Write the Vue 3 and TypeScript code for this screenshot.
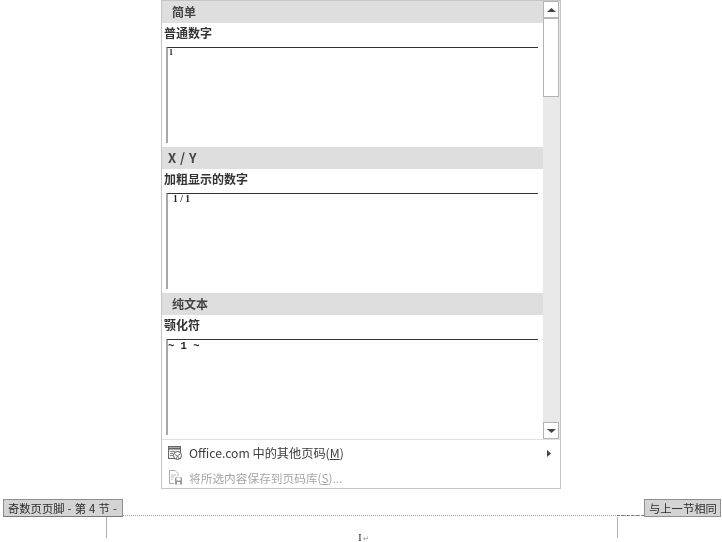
<script setup lang="ts">
interface Section {
  title: string
  label: string
  sample: string
  kind: string
}
const sections: Section[] = [
  { title: '简单', label: '普通数字', sample: '1', kind: 'plain' },
  { title: 'X / Y', label: '加粗显示的数字', sample: '1 / 1', kind: 'bold' },
  { title: '纯文本', label: '颚化符', sample: '~ 1 ~', kind: 'tilde' },
]
</script>

<template>
  <div class="page">
    <div class="panel">
      <div class="gallery">
        <div class="list">
          <section v-for="s in sections" :key="s.title" class="section">
            <h3 :class="['head', s.kind]">{{ s.title }}</h3>
            <div class="label">{{ s.label }}</div>
            <div class="preview"><span :class="['sample', s.kind]">{{ s.sample }}</span></div>
          </section>
        </div>
        <div class="scrollbar">
          <div class="arrow">
            <svg width="11" height="6" viewBox="0 0 11 6"><path d="M5.5 1 10 5H1Z" fill="#444" /></svg>
          </div>
          <div class="thumb"></div>
          <div class="track"></div>
          <div class="arrow">
            <svg width="11" height="6" viewBox="0 0 11 6"><path d="M1 1H10L5.5 5Z" fill="#444" /></svg>
          </div>
        </div>
      </div>
      <div class="menu">
        <div class="item">
          <svg class="icon" width="16" height="16" viewBox="0 0 16 16">
            <rect x="1.5" y="1.5" width="12" height="12" fill="#eee" stroke="#666" />
            <path d="M2 3.5H13" stroke="#666" stroke-width="2" />
            <path d="M3 6.5H8M3 8.5H6M3 10.5H6" stroke="#888" />
            <circle cx="10.5" cy="10.5" r="4" fill="#fff" stroke="#555" />
            <path d="M8 9.5 10.5 11l2.5-2M9 14l1.5-3 1.5 3" stroke="#666" fill="none" stroke-width="0.9" />
          </svg>
          <span class="name">Office.com 中的其他页码(<u>M</u>)</span>
          <svg class="more" width="4" height="7" viewBox="0 0 4 7"><path d="M0 0 4 3.5 0 7Z" fill="#444" /></svg>
        </div>
        <div class="item off">
          <svg class="icon" width="16" height="16" viewBox="0 0 16 16">
            <path d="M2.5 1.5H8L11 4.5V7M2.5 1.5V14.5H7" fill="#fff" stroke="#aaa" />
            <path d="M4 6H9M4 8H7M4 10H6" stroke="#bbb" />
            <rect x="8" y="8.5" width="7" height="7" fill="#999" />
            <rect x="9.5" y="9" width="4" height="2.5" fill="#fff" />
            <rect x="10" y="13" width="3" height="2.5" fill="#fff" />
          </svg>
          <span class="name">将所选内容保存到页码库(<u>S</u>)...</span>
        </div>
      </div>
    </div>

    <div class="footer-bar">
      <div class="tab left">奇数页页脚 - 第 4 节 -</div>
      <div class="rule"><span class="rule-end"></span></div>
      <div class="tab right">与上一节相同</div>
    </div>
    <div class="margins">
      <span class="cursor">I<span class="para">↵</span></span>
    </div>
  </div>
</template>

<style scoped>
.page {
  width: 722px;
  height: 542px;
  overflow: hidden;
  background: #fff;
  font-family: "Noto Sans CJK SC", "Noto Sans", sans-serif;
  filter: blur(0.3px);
}
.panel {
  box-sizing: border-box;
  width: 400px;
  height: 489px;
  margin-left: 161px;
  border: 1px solid #c6c6c6;
  display: flex;
  flex-direction: column;
}
.gallery {
  display: flex;
  flex: none;
  height: 438px;
  overflow: hidden;
  border-bottom: 1px solid #e1e1e1;
}
.list {
  width: 381px;
}
.section {
  height: 146px;
}
.head {
  margin: 0;
  height: 22px;
  line-height: 21px;
  padding-left: 10px;
  background: #dedede;
  color: #444;
  font-size: 12px;
  font-weight: 700;
}
.head.bold {
  padding-left: 6px;
  font-size: 13px;
  letter-spacing: 0.5px;
}
.label {
  height: 24px;
  padding-left: 2px;
  line-height: 19px;
  color: #333;
  font-size: 12px;
  font-weight: 700;
}
.preview {
  box-sizing: border-box;
  width: 372px;
  height: 96px;
  margin-left: 4px;
  border-top: 1px solid #333;
  border-left: 2px solid #a8a8a8;
  color: #222;
  font-family: "Liberation Serif", serif;
  font-size: 8px;
  line-height: 10px;
}
.sample {
  display: block;
  padding-left: 1px;
  font-weight: 700;
}
.sample.bold {
  padding-left: 5px;
  font-size: 9.5px;
}
.sample.tilde {
  padding-left: 0;
  padding-top: 1px;
  font-family: "Liberation Mono", monospace;
  font-size: 10.5px;
}
.scrollbar {
  width: 17px;
  display: flex;
  flex-direction: column;
  background: #e9e9e9;
}
.arrow {
  box-sizing: border-box;
  width: 16px;
  height: 17px;
  flex: none;
  display: flex;
  align-items: center;
  justify-content: center;
  background: #fff;
  border: 1px solid #b4b4b4;
}
.thumb {
  box-sizing: border-box;
  width: 16px;
  height: 79px;
  flex: none;
  background: #fff;
  border: 1px solid #b4b4b4;
}
.track {
  flex: 1;
}
.menu {
  flex: 1;
  padding-top: 1px;
}
.item {
  height: 24px;
  display: flex;
  align-items: center;
  padding-left: 5px;
  color: #3c3c3c;
  font-size: 12.2px;
}
.item.off {
  color: #a6a6a6;
  font-size: 11.7px;
}
.icon {
  flex: none;
  margin-right: 6px;
}
.name {
  flex: 1;
  white-space: nowrap;
}
.more {
  margin-right: 9px;
}
.footer-bar {
  display: flex;
  align-items: flex-end;
  height: 18px;
  margin-top: 10px;
  padding: 0 1px 0 3px;
}
.tab {
  box-sizing: border-box;
  height: 18px;
  line-height: 16px;
  background: #d4d4d4;
  border: 1px solid #8e8e8e;
  color: #2c2c2c;
  font-size: 11.3px;
  white-space: nowrap;
}
.tab.left {
  width: 120px;
  padding-left: 4px;
  word-spacing: 0.6px;
  border-bottom-color: #777;
}
.tab.right {
  width: 77px;
  padding-left: 4px;
}
.rule {
  flex: 1;
  display: flex;
  justify-content: flex-end;
  height: 1px;
  margin-bottom: 1px;
  border-bottom: 1px dotted #a0a0a0;
}
.rule-end {
  width: 27px;
  height: 1px;
  border-bottom: 1px dashed #777;
}
.margins {
  box-sizing: border-box;
  width: 512px;
  height: 21px;
  margin: 0 0 0 106px;
  border-left: 1px solid #b0b0b0;
  border-right: 1px solid #b0b0b0;
  text-align: center;
  font-family: "Liberation Serif", serif;
  font-size: 10px;
  line-height: 10px;
  padding-top: 16px;
  padding-left: 3px;
  color: #222;
}
.para {
  color: #888;
  font-size: 7px;
  margin-left: 1px;
}
</style>
